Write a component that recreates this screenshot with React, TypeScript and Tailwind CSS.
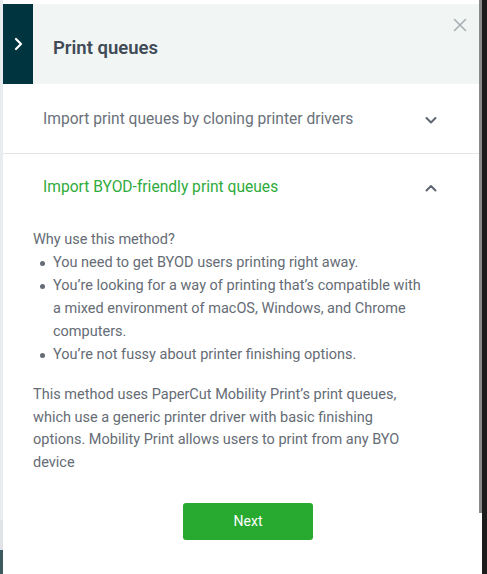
import React from "react";

const font = { fontFamily: "Roboto, 'Noto Sans', sans-serif" };

function ChevronDown() {
  return (
    <svg width="14" height="14" viewBox="0 0 14 14" fill="none" stroke="#5f6670" strokeWidth="2" strokeLinecap="round" strokeLinejoin="round">
      <path d="M2.5 5 L7 9.5 L11.5 5" />
    </svg>
  );
}
function ChevronUp() {
  return (
    <svg width="14" height="14" viewBox="0 0 14 14" fill="none" stroke="#5f6670" strokeWidth="2" strokeLinecap="round" strokeLinejoin="round">
      <path d="M2.5 9.5 L7 5 L11.5 9.5" />
    </svg>
  );
}

function Bullet({ children }: { children: React.ReactNode }) {
  return (
    <li className="flex">
      <span className="w-[20px] shrink-0 flex justify-center pt-[10px] pl-[-2px]">
        <span className="w-[5px] h-[5px] rounded-full bg-[#656c75] ml-[-1px]" />
      </span>
      <span>{children}</span>
    </li>
  );
}

export default function App() {
  return (
    <div className="w-[487px] h-[574px] flex bg-white overflow-hidden" style={font}>
      <div className="w-[3px] h-full flex flex-col bg-[#e9ecef]">
        <div className="h-[520px]" />
        <div className="h-[30px] bg-[#dfe3e8]" />
        <div className="h-[24px] bg-[#3d5a60]" />
      </div>
      <div className="w-[476px] h-full flex flex-col pt-[4px]">
        <div className="h-[80px] flex bg-[#f1f5f4] relative">
          <div className="w-[30px] h-full bg-[#003540] flex items-center justify-center">
            <svg width="10" height="14" viewBox="0 0 10 14" fill="none" stroke="white" strokeWidth="2.2" strokeLinecap="round" strokeLinejoin="round">
              <path d="M3 2 L8 7 L3 12" />
            </svg>
          </div>
          <div className="pl-[20px] pt-[32px] text-[18.5px] font-semibold text-[#3f4b56] leading-[24px]">Print queues</div>
          <svg className="absolute right-[12px] top-[14px]" width="14" height="14" viewBox="0 0 14 14" stroke="#a9aeb3" strokeWidth="1.6" strokeLinecap="round">
            <path d="M1.5 1.5 L12.5 12.5 M12.5 1.5 L1.5 12.5" />
          </svg>
        </div>
        <div className="h-[70px] flex items-center justify-between pl-[40px] pr-[41px] pt-[2px] border-b border-[#e3e5e7]">
          <span className="text-[15.6px] text-[#6a717a]">Import print queues by cloning printer drivers</span>
          <ChevronDown />
        </div>
        <div className="h-[66px] flex items-center justify-between pl-[40px] pr-[41px] pt-[2px]">
          <span className="text-[15.6px] text-[#2fab3c]">Import BYOD-friendly print queues</span>
          <ChevronUp />
        </div>
        <div className="pl-[30px] pr-[50px] text-[14.5px] leading-[23px] text-[#656c75]">
          <p className="mt-[8px]">Why use this method?</p>
          <ul>
            <Bullet>You need to get BYOD users printing right away.</Bullet>
            <Bullet>You’re looking for a way of printing that’s compatible with a mixed environment of macOS, Windows, and Chrome computers.</Bullet>
            <Bullet>You’re not fussy about printer finishing options.</Bullet>
          </ul>
          <p className="mt-[18px] leading-[22.7px] w-[375px]">This method uses PaperCut Mobility Print’s print queues, which use a generic printer driver with basic finishing options. Mobility Print allows users to print from any BYO device</p>
        </div>
        <div className="flex justify-center pt-[28px] pl-[14px]">
          <button className="w-[130px] h-[37px] rounded-[3px] bg-[#28a92f] text-white text-[14px]">Next</button>
        </div>
      </div>
      <div className="w-[3px] h-full flex flex-col">
        <div className="h-[513px] bg-[#8a8a8a]" />
        <div className="flex-1 bg-white" />
      </div>
      <div className="w-[5px] h-full bg-[#1c1c1c]" />
    </div>
  );
}
